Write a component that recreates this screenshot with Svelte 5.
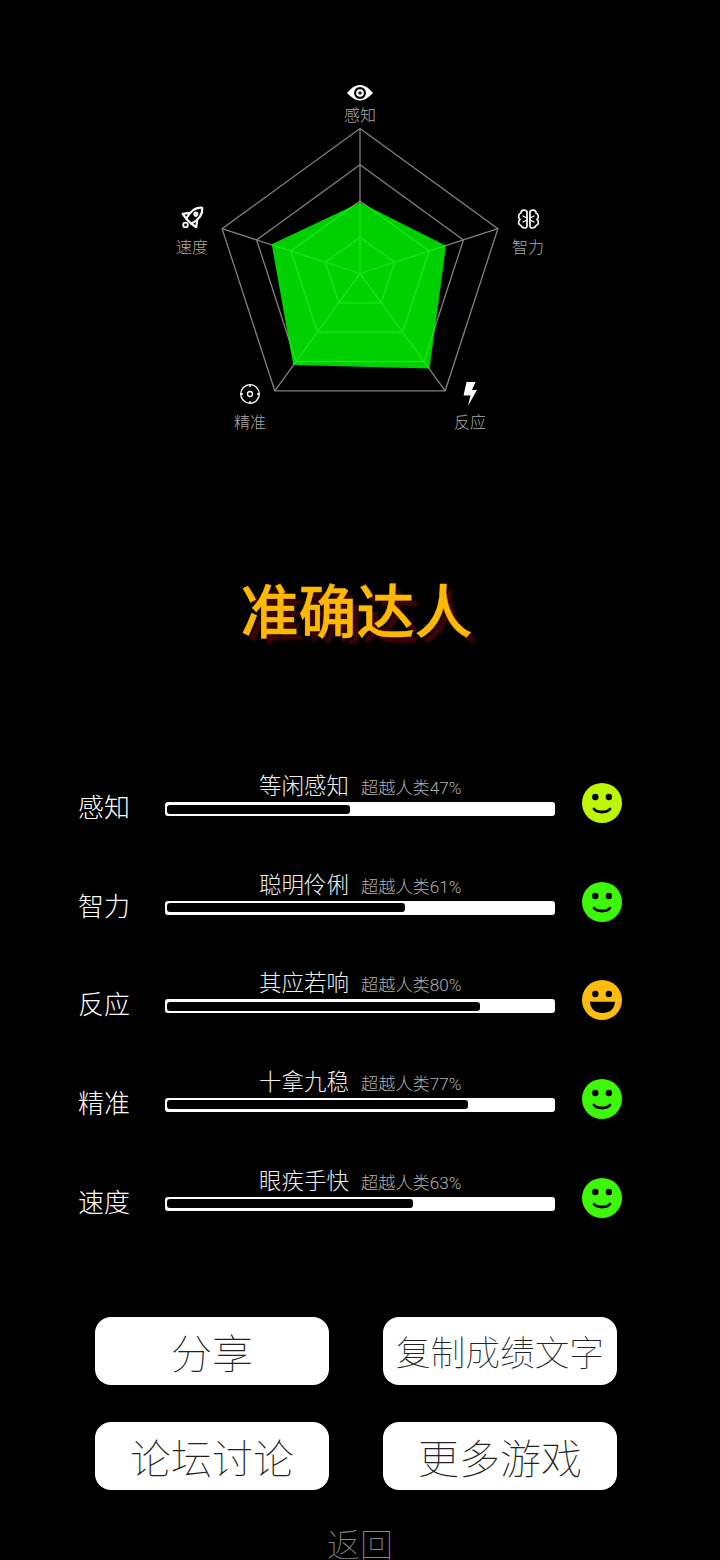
<script>
	const center = [360, 273.5];
	const rings = [145, 108.75, 72.5, 36.25];
	const angles = [0, 1, 2, 3, 4].map((i) => ((i * 72 - 90) * Math.PI) / 180);

	function ringPoints(r) {
		return angles
			.map((a) => `${(center[0] + r * Math.cos(a)).toFixed(1)},${(center[1] + r * Math.sin(a)).toFixed(1)}`)
			.join(' ');
	}

	const outer = ringPoints(145).split(' ');
	const score = '360,202.5 446,245.7 429.5,368.5 293.3,365 271.7,244.3';

	const axes = [
		{ name: '感知', x: 360, y: 121 },
		{ name: '智力', x: 528, y: 253 },
		{ name: '反应', x: 470, y: 428 },
		{ name: '精准', x: 250, y: 428 },
		{ name: '速度', x: 192, y: 253 }
	];

	const rows = [
		{ name: '感知', title: '等闲感知', pct: 47, color: '#bcf505', grin: false },
		{ name: '智力', title: '聪明伶俐', pct: 61, color: '#3df808', grin: false },
		{ name: '反应', title: '其应若响', pct: 80, color: '#fdbd0e', grin: true },
		{ name: '精准', title: '十拿九稳', pct: 77, color: '#3df808', grin: false },
		{ name: '速度', title: '眼疾手快', pct: 63, color: '#3df808', grin: false }
	];

	const buttons = [
		{ text: '分享', small: false },
		{ text: '复制成绩文字', small: true },
		{ text: '论坛讨论', small: false },
		{ text: '更多游戏', small: false }
	];
</script>

<div class="page">
	<svg class="radar" viewBox="0 0 720 450" width="720" height="450">
		{#each rings as r}
			<polygon points={ringPoints(r)} class="ring" />
		{/each}
		{#each outer as p}
			<line x1={center[0]} y1={center[1]} x2={p.split(',')[0]} y2={p.split(',')[1]} class="ring" />
		{/each}
		<polygon points={score} class="score" />

		{#each axes as axis}
			<text x={axis.x} y={axis.y} text-anchor="middle" class="axis">{axis.name}</text>
		{/each}

		<!-- eye -->
		<path d="M347 93 C352 87 356 85 360 85 C364 85 368 87 373 93 C368 98 364 100.500 360 100.500 C356 100.500 352 98 347 93Z" fill="#fff" />
		<circle cx="360" cy="93" r="6" fill="#000" />
		<circle cx="360" cy="93" r="3.800" fill="#fff" />
		<circle cx="360" cy="93" r="1.800" fill="#222" />

		<!-- rocket -->
		<g transform="translate(193 217) rotate(45)" fill="none" stroke="#fff" stroke-width="2.200" stroke-linejoin="round">
			<path d="M0 -13 C5 -9 6 -2 3.500 6 H-3.500 C-6 -2 -5 -9 0 -13Z" />
			<path d="M-5 -1 L-9.500 5 L-3.500 6 M5 -1 L9.500 5 L3.500 6" />
			<circle cx="0" cy="-4" r="1.500" />
		</g>
		<circle cx="185.500" cy="225" r="2.300" fill="none" stroke="#fff" stroke-width="1.800" />

		<!-- brain -->
		<g fill="none" stroke="#fff" stroke-width="1.700" stroke-linejoin="round" stroke-linecap="round">
			<path d="M527 211.500 C525 209 521 210 521 213 C518 214 518 218 520 219.500 C518 221 518 225 521 225.500 C522 228.500 527 229 527 226Z" />
			<path d="M530 211.500 C532 209 536 210 536 213 C539 214 539 218 537 219.500 C539 221 539 225 536 225.500 C535 228.500 530 229 530 226Z" />
			<path d="M523 216 L527 218 M523 222 L527 220 M534 216 L530 218 M534 222 L530 220" stroke-width="1.200" />
		</g>

		<!-- target -->
		<g fill="none" stroke="#fff">
			<circle cx="250" cy="394" r="9.300" stroke-width="1.300" />
			<circle cx="250" cy="394" r="2.500" stroke-width="1.300" />
			<path d="M250 384 V387 M250 401 V404 M240 394 H243 M257 394 H260" stroke-width="1.400" />
		</g>

		<!-- bolt -->
		<polygon points="466.500,382 475.500,382 472,390 477,390 468,406 470.500,395.500 463.500,395.500" fill="#fff" />
	</svg>

	<h1 class="title">准确达人</h1>

	<section class="rows">
		{#each rows as row}
			<div class="row">
				<div class="name">{row.name}</div>
				<div class="meter">
					<div class="caption">
						<span class="verdict">{row.title}</span>
						<span class="rank">超越人类{row.pct}%</span>
					</div>
					<div class="bar">
						<div class="fill" style="width: {row.pct * 3.92 - 1}px"></div>
					</div>
				</div>
				<svg class="face" viewBox="0 0 40 40" width="40" height="40">
					<circle cx="20" cy="20" r="20" fill={row.color} />
					<circle cx="13.300" cy="14" r="3.200" fill="#000" />
					<circle cx="26.900" cy="14" r="3.200" fill="#000" />
					{#if row.grin}
						<path d="M8 21.700 H33 C33 29 27 33 20.500 33 C14 33 8 29 8 21.700Z" fill="#000" />
					{:else}
						<path d="M12 26 C15 30 25 30 28 26" fill="none" stroke="#000" stroke-width="2.800" stroke-linecap="round" />
					{/if}
				</svg>
			</div>
		{/each}
	</section>

	<section class="buttons">
		{#each buttons as button}
			<button class="btn" class:small={button.small}>{button.text}</button>
		{/each}
	</section>

	<div class="back">返回</div>
</div>

<style>
	:global(body) {
		margin: 0;
		background: #000;
	}

	.page {
		height: 1560px;
		overflow: hidden;
		background: #000;
		font-family: Roboto, "Noto Sans CJK SC", "Liberation Sans", sans-serif;
		font-weight: 300;
	}

	.radar {
		display: block;
	}

	.ring {
		fill: none;
		stroke: #808080;
		stroke-width: 1.3;
	}

	.score {
		fill: #00ff00;
		fill-opacity: 0.81;
	}

	.axis {
		fill: #aaa;
		font-size: 16px;
	}

	.title {
		margin: 131px 7px 0 0;
		height: 64px;
		line-height: 64px;
		text-align: center;
		font-size: 58px;
		font-weight: 500;
		color: #ffb800;
		-webkit-text-stroke: 0.5px #ffb800;
		text-shadow: 6px 6px 2px #3c0505;
	}

	.rows {
		display: flex;
		flex-direction: column;
		gap: 50.67px;
		margin-top: 123px;
		padding-left: 78px;
	}

	.row {
		display: grid;
		grid-template-columns: 60px 390px 40px;
		column-gap: 27px;
		height: 48px;
		align-items: end;
	}

	.name {
		color: #fff;
		font-size: 26px;
		line-height: 36px;
		margin-bottom: -10px;
	}

	.caption {
		display: flex;
		align-items: baseline;
		height: 28px;
		margin-bottom: 2px;
		padding-left: 94px;
		line-height: 28px;
		white-space: nowrap;
	}

	.verdict {
		color: #eee;
		font-size: 22.5px;
	}

	.rank {
		margin-left: 12px;
		color: #b0b0b0;
		font-size: 17.200px;
	}

	.bar {
		box-sizing: border-box;
		height: 14px;
		padding: 2.500px 2px;
		background: #fff;
		border-radius: 3px;
	}

	.fill {
		height: 100%;
		background: #000;
		border-radius: 3px;
	}

	.face {
		display: block;
		margin-bottom: -7px;
	}

	.buttons {
		display: grid;
		grid-template-columns: 234px 234px;
		gap: 37px 54px;
		justify-content: center;
		margin-top: 106px;
		padding-right: 8px;
	}

	.btn {
		height: 68px;
		padding: 0;
		border: none;
		border-radius: 16px;
		background: #fff;
		color: #222;
		font-family: inherit;
		font-weight: 100;
		font-size: 41px;
		white-space: nowrap;
	}

	.btn.small {
		font-size: 34.700px;
	}

	.back {
		margin-top: 34px;
		text-align: center;
		color: #888;
		font-size: 33px;
		font-weight: 100;
		line-height: 44px;
	}
</style>
